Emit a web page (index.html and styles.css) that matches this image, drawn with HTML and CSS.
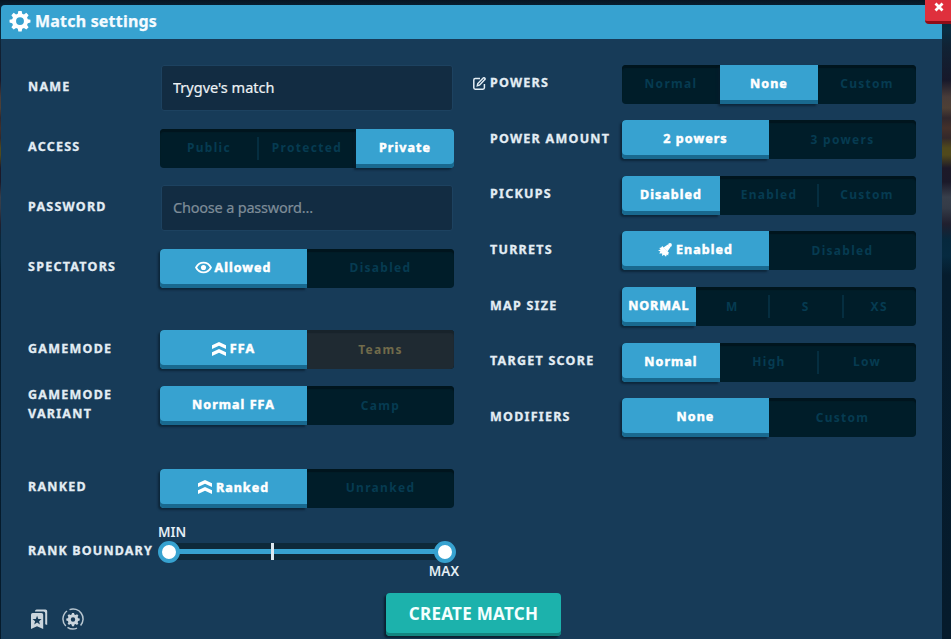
FILE: index.html
```html
<!DOCTYPE html>
<html lang="en">
<head>
<meta charset="utf-8">
<title>Match settings</title>
<link rel="stylesheet" href="styles.css">
</head>
<body>
<svg class="defs" aria-hidden="true">
  <symbol id="chevrons" viewBox="0 0 14 14"><path d="M0 3.300 7 0l7 3.300v3.700L7 3.800 0 7zM0 10.300 7 7l7 3.300V14l-7-3.200L0 14z"/></symbol>
</svg>
<main class="window">
  <header class="titlebar">
    <svg class="gear" viewBox="0 0 24 24"><path fill-rule="evenodd" d="M10.200 1h3.600l.6 3 1.900.8 2.600-1.700 2.500 2.500-1.700 2.600.8 1.900 2.900.6v3l-2.900.7-.8 1.900 1.700 2.600-2.500 2.500-2.600-1.700-1.900.8-.6 2.900h-3.600l-.6-2.900-1.900-.8-2.600 1.700-2.500-2.500 1.700-2.600-.8-1.900L.6 13.700v-3l2.900-.6.8-1.900-1.700-2.600 2.500-2.500 2.600 1.700 1.900-.8zM12 7.800a4.300 4.300 0 1 0 0 8.600 4.300 4.300 0 0 0 0-8.600z"/></svg>
    <h1>Match settings</h1>
  </header>
  <button class="close" aria-label="Close"><svg viewBox="0 0 10 10"><path d="M1.500 1.500l7 7M8.500 1.500l-7 7"/></svg></button>
  <div class="columns">
    <section class="left">
      <div class="row"><label class="name">NAME</label><input class="field" value="Trygve's match"></div>
      <div class="row"><label class="name">ACCESS</label><div class="switch"><span>Public</span><span class="split">Protected</span><span class="on">Private</span></div></div>
      <div class="row"><label class="name">PASSWORD</label><input class="field" placeholder="Choose a password..."></div>
      <div class="row"><label class="name">SPECTATORS</label><div class="switch"><span class="on"><svg class="eye" viewBox="0 0 16 12"><path d="M1 6C4.200-.2 11.800-.2 15 6 11.800 12.200 4.200 12.200 1 6z"/><circle cx="8" cy="6" r="2.400"/></svg>Allowed</span><span>Disabled</span></div></div>
      <div class="row mode"><label class="name">GAMEMODE</label><div class="switch"><span class="on"><svg class="rank"><use href="#chevrons"/></svg>FFA</span><span class="locked">Teams</span></div></div>
      <div class="row variant"><label class="name">GAMEMODE VARIANT</label><div class="switch"><span class="on">Normal FFA</span><span>Camp</span></div></div>
      <div class="row ranked"><label class="name">RANKED</label><div class="switch"><span class="on"><svg class="rank"><use href="#chevrons"/></svg>Ranked</span><span>Unranked</span></div></div>
      <div class="row boundary"><label class="name">RANK BOUNDARY</label>
        <div class="slider"><i class="rail"></i><i class="tick"></i><i class="knob low"></i><i class="knob high"></i><b class="min">MIN</b><b class="max">MAX</b></div>
      </div>
    </section>
    <section class="right">
      <div class="row"><label class="name"><svg class="edit" viewBox="0 0 13 13"><path d="M7 1.500H2.200Q.8 1.500.8 3v7.800q0 1.400 1.400 1.400H10q1.400 0 1.400-1.400V7"/><path d="M4.300 8.800l.5-2.300L10.200 1q.8-.6 1.500.1.800.8.1 1.500L6.500 8.200z"/></svg>POWERS</label><div class="switch"><span>Normal</span><span class="on">None</span><span>Custom</span></div></div>
      <div class="row"><label class="name">POWER AMOUNT</label><div class="switch"><span class="on">2 powers</span><span>3 powers</span></div></div>
      <div class="row"><label class="name">PICKUPS</label><div class="switch"><span class="on">Disabled</span><span>Enabled</span><span class="split">Custom</span></div></div>
      <div class="row"><label class="name">TURRETS</label><div class="switch"><span class="on"><svg class="turret" viewBox="0 0 14 14"><path d="M4.200 3 11 9.800 10.200 11 10.300 12.400 8.800 11.600 8 13.800 6 11.800 4 13 4.200 10.600 1.200 10.600 2.400 8.600 0 7.600 2.600 6.400 1.200 5 3.200 4.600z"/><path d="M5.500 4.500 9.800 1.600 12.400 4.200 9.500 8.500z"/><circle cx="12" cy="2" r="1.900"/></svg>Enabled</span><span>Disabled</span></div></div>
      <div class="row"><label class="name">MAP SIZE</label><div class="switch sizes"><span class="on">NORMAL</span><span>M</span><span class="split">S</span><span class="split">XS</span></div></div>
      <div class="row"><label class="name">TARGET SCORE</label><div class="switch"><span class="on">Normal</span><span>High</span><span class="split">Low</span></div></div>
      <div class="row"><label class="name">MODIFIERS</label><div class="switch"><span class="on">None</span><span>Custom</span></div></div>
    </section>
  </div>
  <footer class="actions">
    <div class="tools">
      <svg class="saved" viewBox="0 0 18 20"><path d="M5 2.200Q5 .5 6.700.5h8.800Q17.200.5 17.200 2.200V16l-2-.8V4.200q0-1.700-1.700-1.700H5z"/><path fill-rule="evenodd" d="M2.700 4h8.800q1.700 0 1.700 1.700V20L7 17.200 1 20V5.700Q1 4 2.700 4zM7.100 6.800l-1.300 3.100-3.300.2 2.600 2.100-.9 3.200 2.900-1.800 2.800 1.800-.8-3.200 2.500-2.100-3.300-.2z"/></svg>
      <svg class="reset" viewBox="0 0 22 22"><g class="arcs"><path d="M5 3A10 10 0 0 0 3.800 18"/><path d="M7.500 1.600A10 10 0 0 1 18.600 17.500"/><path d="M5.500 19.300A10 10 0 0 0 15 20.100"/></g><path fill-rule="evenodd" d="M10 5h2l.4 1.600 1.200.5 1.400-.9 1.400 1.400-.8 1.400.5 1.200 1.600.4v2l-1.600.4-.5 1.200.8 1.400-1.400 1.400-1.400-.9-1.200.5L12 18.200h-2l-.4-1.600-1.200-.5-1.400.9-1.400-1.400.8-1.400-.5-1.200-1.600-.4v-2l1.600-.4.5-1.200-.8-1.400L7 6.200l1.400.9 1.200-.5zM11 9.300a2.200 2.200 0 1 0 0 4.400 2.200 2.200 0 0 0 0-4.400z"/></svg>
    </div>
    <button class="create">CREATE MATCH</button>
  </footer>
</main>
</body>
</html>
```
FILE: styles.css
```css
* { box-sizing: border-box; }
body {
  margin: 0;
  height: 639px;
  padding: 5px 9px 0 1px;
  overflow: hidden;
  font-family: "Noto Sans", "Open Sans", sans-serif;
  color: #e3edf4;
  background: linear-gradient(#071522 0, #082033 6px, #0a2d42 30px, #102335 45px, #17182a 80px, #493c39 97px, #4e4035 108px, #30272c 118px, #43302a 128px, #33282a 138px, #50491c 148px, #50491c 155px, #1d1928 168px, #1b1929 182px, #383f4b 197px, #343b47 208px, #201f2e 224px, #06283d 240px, #062a40 256px, #051c2d 275px, #061b2c 639px);
}
.defs { display: none; }
.window {
  position: relative;
  height: 634px;
  background: #173b58;
  border-radius: 4px 4px 0 0;
}
.titlebar {
  display: flex;
  align-items: center;
  gap: 4px;
  height: 34px;
  padding: 0 0 2px 8px;
  background: #37a2d0;
  border-radius: 4px 4px 0 0;
}
.gear { width: 22px; height: 22px; fill: #fff; }
h1 { margin: 0; font-size: 16px; line-height: 22px; letter-spacing: 0.2px; color: #f4fbff; -webkit-text-stroke: 0.25px; }
.close {
  position: absolute;
  top: -5px;
  right: -9px;
  display: flex;
  align-items: center;
  justify-content: center;
  width: 26px;
  height: 24px;
  padding: 0 0 7px 1px;
  border: 0;
  border-bottom: 3px solid #8f0d18;
  border-radius: 0 0 0 4px;
  background: #df303d;
}
.close svg { width: 10px; height: 10px; stroke: #fff; stroke-width: 2.8; }
.columns { display: flex; height: 537px; padding-left: 27px; }
.left { width: 462px; padding-top: 19px; }
.right { padding-top: 17.4px; }
.row { display: flex; align-items: center; height: 60px; }
.right .row { height: 55.6px; }
.name {
  position: relative;
  width: 132px;
  padding-bottom: 3px;
  font-size: 12.500px;
  font-weight: 700;
  line-height: 19px;
  letter-spacing: 1.250px;
  -webkit-text-stroke: 0.3px;
}
.left .mode { height: 56px; margin-top: 23.5px; }
.left .variant { height: 56px; }
.left .ranked { height: 56px; margin-top: 26.5px; }
.left .boundary { height: 50px; margin-top: 10px; }
.boundary .name { white-space: nowrap; letter-spacing: 1.150px; padding-bottom: 2px; }
.field {
  width: 292px;
  height: 46px;
  margin-left: 1px;
  padding: 0 11px 3px;
  border: 1px solid #1d4260;
  border-radius: 3px;
  background: #122c42;
  color: #edf2f5;
  font: 14.500px "Noto Sans", sans-serif;
  -webkit-text-stroke: 0.2px;
}
.field::placeholder { color: #7e8c98; opacity: 1; letter-spacing: -0.2px; }
.switch {
  display: flex;
  width: 294px;
  height: 39px;
  border-radius: 4px;
  background: #001d29;
  box-shadow: inset 0 3px 1px #00151d;
}
.switch span {
  position: relative;
  display: flex;
  flex: 1 1 0;
  align-items: center;
  justify-content: center;
  min-width: 0;
  padding-bottom: 1px;
  font-size: 12px;
  font-weight: 700;
  letter-spacing: 1.300px;
  white-space: nowrap;
  color: #063b51;
}
.switch .on {
  z-index: 1;
  padding-bottom: 2px;
  color: #fff;
  font-size: 12.500px;
  letter-spacing: 1.050px;
  -webkit-text-stroke: 0.5px;
  background: #37a2d0;
  box-shadow: inset 0 -4px #19698f, -2px 2px 2px rgba(8, 28, 43, .65);
}
.switch span:first-child { border-radius: 4px 0 0 4px; }
.switch span:last-child { border-radius: 0 4px 4px 0; }
.switch .split::before {
  content: "";
  position: absolute;
  left: -1px;
  top: 8px;
  width: 2px;
  height: 23px;
  background: #052e40;
}
.switch .locked { color: #716b4b; background: #1f2a32; box-shadow: inset 0 3px 1px #18232b; }
.sizes .on { letter-spacing: 0.900px; }
.switch svg { flex: none; fill: #fff; }
.rank { width: 14px; height: 14px; margin-right: 4px; }
.eye { width: 17px; height: 13px; margin-right: 2px; }
.eye path { fill: none; stroke: #fff; stroke-width: 1.700; }
.turret { width: 14px; height: 14px; margin-right: 4px; }
.edit { position: absolute; left: -17px; top: 4px; width: 13px; height: 13px; fill: none; stroke: #e3edf4; stroke-width: 1.500; }
.slider { position: relative; width: 294px; height: 17px; background: #0e2939; border-radius: 8px; }
.slider i, .slider b { position: absolute; }
.rail { left: 12px; right: 12px; top: 6px; height: 5px; background: #37a2d0; }
.tick { left: 111px; top: 0; width: 3px; height: 17px; background: #dce8ef; }
.knob { top: -2px; width: 22px; height: 22px; border: 4px solid #37a2d0; border-radius: 50%; background: #fff; }
.low { left: -2px; }
.high { right: -2px; }
.slider b { font-size: 13.500px; line-height: 16px; font-weight: 600; }
.min { left: -2px; top: -19px; }
.max { right: -5px; top: 20px; }
.actions { display: flex; align-items: flex-start; padding: 17px 0 0 29px; }
.tools { display: flex; width: 356px; gap: 14px; padding-top: 15px; }
.tools svg { fill: #cbd5dd; }
.saved { width: 18px; height: 22px; }
.reset { width: 22px; height: 22px; }
.arcs { fill: none; stroke: #b8c6d0; stroke-width: 1.500; }
.create {
  width: 175px;
  height: 43px;
  padding: 0 0 3px;
  border: 0;
  border-radius: 4px;
  background: #1cb2ac;
  box-shadow: inset 0 -3px #128580, -2px 2px 2px #0a2031;
  color: #f4ffff;
  font: 700 17px "Noto Sans", sans-serif;
  letter-spacing: 0.300px;
}
```
